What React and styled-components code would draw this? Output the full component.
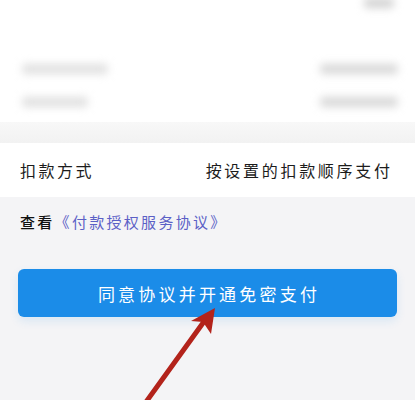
import React from "react";
import styled, { createGlobalStyle } from "styled-components";

const Global = createGlobalStyle`
  html, body { margin: 0; padding: 0; background: #f4f4f6; }
  body { width: 415px; height: 400px; overflow: hidden; font-family: "Noto Sans CJK SC", "Noto Sans", sans-serif; }
`;

const Page = styled.div`
  position: relative;
  width: 415px;
  height: 400px;
  display: flex;
  flex-direction: column;
  background: #f4f4f6;
  overflow: hidden;
`;

const TopPanel = styled.div`
  height: 122px;
  background: #ffffff;
  display: flex;
  flex-direction: column;
  padding: 0 17px 0 22px;
  box-sizing: border-box;
`;

const TopRight = styled.div`
  display: flex;
  justify-content: flex-end;
  height: 14px;
`;

const Blob = styled.div`
  width: ${(p) => p.w}px;
  height: ${(p) => p.h}px;
  background: ${(p) => p.c || "#d6d6d6"};
  border-radius: 4px;
  filter: blur(${(p) => p.b || 4}px);
`;

const BlurRow = styled.div`
  display: flex;
  justify-content: space-between;
  align-items: center;
  height: 33px;
  margin-top: ${(p) => p.mt || 0}px;
`;

const Gap = styled.div`
  height: 21px;
  background: linear-gradient(#f8f8f8, #f2f2f2);
`;

const InfoRow = styled.div`
  height: 54px;
  background: #ffffff;
  display: flex;
  justify-content: space-between;
  align-items: center;
  padding: 0 25px 0 20px;
  font-size: 16px;
  color: #1c1c1c;
`;

const Label = styled.span`
  letter-spacing: 2.5px;
`;

const Value = styled.span`
  letter-spacing: 2.7px;
  margin-right: -2.7px;
`;

const Agreement = styled.div`
  height: 48px;
  display: flex;
  align-items: center;
  padding: 0 20px;
  font-size: 15px;
  letter-spacing: 2.3px;
  color: #5b60c6;
`;

const Lead = styled.span`
  color: #111111;
  font-weight: 500;
`;

const ButtonWrap = styled.div`
  padding: 24px 18px 0 18px;
`;

const Button = styled.button`
  width: 379px;
  height: 48px;
  border: none;
  border-radius: 6px;
  background: #1b8ce8;
  color: #ffffff;
  font-family: "Noto Sans CJK SC", "Noto Sans", sans-serif;
  font-size: 17px;
  letter-spacing: 3.2px;
  padding: 0 0 0 3px;
  box-shadow: 0 4px 10px rgba(27, 140, 232, 0.12);
`;

const ArrowSvg = styled.svg`
  position: absolute;
  left: 0;
  top: 0;
  pointer-events: none;
`;

export default function App() {
  return (
    <Page>
      <Global />
      <TopPanel>
        <TopRight>
          <Blob w={30} h={10} c="#d2d2d2" b={4} style={{ marginTop: -2, marginRight: 4 }} />
        </TopRight>
        <BlurRow mt={38}>
          <Blob w={86} h={10} c="#e0e0e0" />
          <Blob w={78} h={10} c="#d8d8d8" />
        </BlurRow>
        <BlurRow>
          <Blob w={66} h={10} c="#e0e0e0" />
          <Blob w={78} h={10} c="#d8d8d8" />
        </BlurRow>
      </TopPanel>
      <Gap />
      <InfoRow>
        <Label>扣款方式</Label>
        <Value>按设置的扣款顺序支付</Value>
      </InfoRow>
      <Agreement>
        <Lead>查看</Lead>《付款授权服务协议》
      </Agreement>
      <ButtonWrap>
        <Button>同意协议并开通免密支付</Button>
      </ButtonWrap>
      <ArrowSvg width="415" height="400" viewBox="0 0 415 400">
        <line x1="146" y1="402" x2="208" y2="316" stroke="#b3231b" strokeWidth="5" strokeLinecap="round" />
        <polygon points="215,308 191,321 203,322 211,334 " fill="#b3231b" />
      </ArrowSvg>
    </Page>
  );
}
